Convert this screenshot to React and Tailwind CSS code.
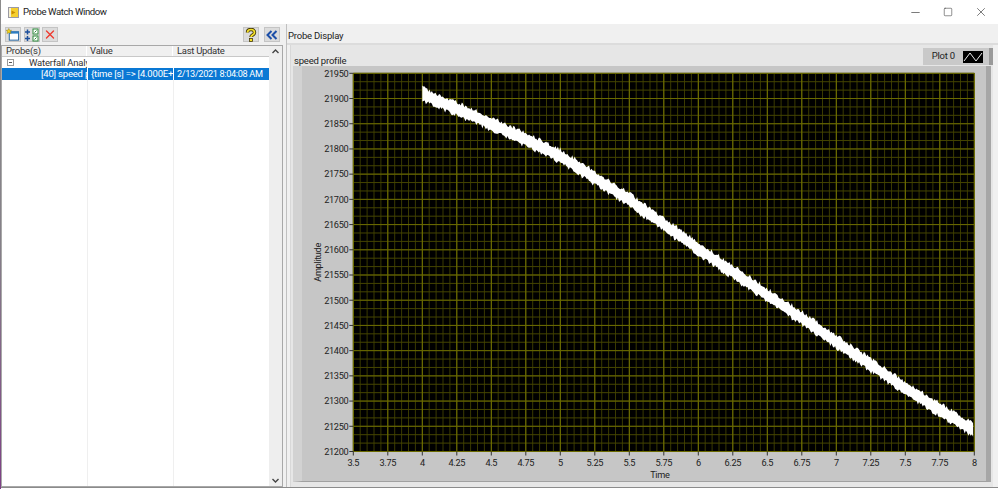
import React from 'react';
import { Minus, Square, X } from 'lucide-react';

const UI = 'font-["Roboto","Liberation_Sans",sans-serif]';

// plot box inside the graph svg, which starts at page (293,67)
const LEFT = 60.3;
const TOP = 7.3;
const RIGHT = 681.3;
const BOTTOM = 385.5;
const px = (t) => LEFT + ((t - 3.5) / 4.5) * (RIGHT - LEFT);
const py = (v) => TOP + ((21950 - v) / 750) * (BOTTOM - TOP);

const yTicks = Array.from({ length: 16 }, (_, i) => 21950 - i * 50);
const xTicks = Array.from({ length: 19 }, (_, i) => 3.5 + i * 0.25);

function rand(seed) {
  const s = Math.sin(seed * 127.1) * 43758.5453;
  return s - Math.floor(s);
}

// reading of the trace: time, centre value
const trace = [
  [4, 21909], [4.5, 21850], [5, 21786], [5.5, 21699], [6, 21602], [6.5, 21510], [7, 21418], [7.5, 21325], [8, 21241],
];

function centre(t) {
  for (let i = 0; i < trace.length - 1; i++) {
    const [a, va] = trace[i];
    const [b, vb] = trace[i + 1];
    if (t <= b) return va + ((t - a) / (b - a)) * (vb - va);
  }
  return 21241;
}

function tracePoints() {
  const upper = [];
  const lower = [];
  for (let x = px(4); x <= RIGHT; x += 1.2) {
    const t = 3.5 + ((x - LEFT) / (RIGHT - LEFT)) * 4.5;
    const y = py(centre(t));
    upper.push(`${x.toFixed(1)},${(y - 4.8 - rand(x) ** 1.5 * 4).toFixed(1)}`);
    lower.push(`${x.toFixed(1)},${(y + 4.8 + rand(x + 9) ** 1.5 * 4).toFixed(1)}`);
  }
  return [...upper, ...lower.reverse()].join(' ');
}

function Graph() {
  const minorX = [];
  for (let i = 0; i <= 90; i++) minorX.push(LEFT + (i * (RIGHT - LEFT)) / 90);
  const minorY = [];
  for (let i = 0; i <= 45; i++) minorY.push(TOP + (i * (BOTTOM - TOP)) / 45);
  const label = { fontSize: 9.2, letterSpacing: -0.35, fill: '#222' };

  return (
    <svg width="698" height="415" viewBox="0 0 698 415" className="block">
      <rect x={LEFT} y={TOP} width={RIGHT - LEFT} height={BOTTOM - TOP} fill="#000" />
      {minorX.map((x, i) => (
        <line key={i} x1={x} x2={x} y1={TOP} y2={BOTTOM} stroke="#3a3a00" strokeWidth="1" />
      ))}
      {minorY.map((y, i) => (
        <line key={i} x1={LEFT} x2={RIGHT} y1={y} y2={y} stroke="#454500" strokeWidth="1" />
      ))}
      {xTicks.map((t) => (
        <line key={t} x1={px(t)} x2={px(t)} y1={TOP} y2={BOTTOM} stroke="#767600" strokeWidth="1" />
      ))}
      {yTicks.map((v) => (
        <line key={v} x1={LEFT} x2={RIGHT} y1={py(v)} y2={py(v)} stroke="#6a6a00" strokeWidth="1" />
      ))}
      <polygon points={tracePoints()} fill="#fff" />
      {yTicks.map((v) => (
        <g key={v}>
          <line x1={LEFT - 4} x2={LEFT} y1={py(v)} y2={py(v)} stroke="#333" />
          <text x={LEFT - 5} y={py(v) + 3.3} textAnchor="end" {...label}>{v}</text>
        </g>
      ))}
      {xTicks.map((t) => (
        <g key={t}>
          <line x1={px(t)} x2={px(t)} y1={BOTTOM} y2={BOTTOM + 4} stroke="#333" />
          <text x={px(t)} y={BOTTOM + 14} textAnchor="middle" {...label}>{t}</text>
        </g>
      ))}
      <text x={(LEFT + RIGHT) / 2 - 4} y={BOTTOM + 26} textAnchor="middle" {...label}>Time</text>
      <text transform={`translate(28 ${py(21575)}) rotate(-90)`} textAnchor="middle" {...label}>Amplitude</text>
    </svg>
  );
}

function ToolButton({ children, className = '' }) {
  return (
    <div className={`w-4 h-[15px] flex items-center justify-center bg-[#dcdcdc] border border-[#c4c4c4] ${className}`}>
      {children}
    </div>
  );
}

function TitleIcon() {
  return (
    <svg width="11" height="11" viewBox="0 0 11 11">
      <rect x="0.5" y="0.5" width="10" height="10" fill="#f6cf2e" stroke="#9a9aa4" />
      <path d="M1 1h2v9H1z" fill="#f5efd0" />
      <path d="M3.500 3.500L7.500 5.500 3.500 7.500z" fill="#c98a00" />
    </svg>
  );
}

function NewProbeIcon() {
  return (
    <svg width="15" height="14" viewBox="0 0 15 14">
      <rect x="3.5" y="3.5" width="10" height="9" fill="#fff" stroke="#1b5f9e" />
      <rect x="3.5" y="3.5" width="10" height="2" fill="#2d7fc4" />
      <path d="M3 0l1 2 2 0-1.500 1.500 1 2-2.500-1-2 1 .5-2L0 2l2 0z" fill="#f2d21e" stroke="#7a6a00" strokeWidth="0.4" />
    </svg>
  );
}

function ArrangeIcon() {
  return (
    <svg width="14" height="14" viewBox="0 0 14 14">
      <path d="M0 4h5M2.500 1.500v5M0 10.500h5M2.500 8v5" stroke="#1d4f9c" strokeWidth="1.500" />
      <rect x="8" y="1" width="5" height="5" fill="#fff" stroke="#2d8a3a" />
      <rect x="8" y="8" width="5" height="5" fill="#fff" stroke="#2d8a3a" />
      <path d="M9.500 4.500l2-2M9.500 11.500l2-2" stroke="#2d8a3a" />
    </svg>
  );
}

function HelpIcon() {
  return (
    <svg width="12" height="14" viewBox="0 0 12 14">
      <path d="M2.500 4.500C2.500 2.500 4 1.500 6 1.500s3.500 1 3.500 3c0 2.500-3.500 2.500-3.500 4.500" fill="none" stroke="#44380a" strokeWidth="3.400" />
      <path d="M2.500 4.500C2.500 2.500 4 1.500 6 1.500s3.500 1 3.500 3c0 2.500-3.500 2.500-3.500 4.500" fill="none" stroke="#f5e22a" strokeWidth="1.700" />
      <rect x="4.500" y="10.500" width="3" height="3" fill="#f5e22a" stroke="#44380a" strokeWidth="0.800" />
    </svg>
  );
}

function ChevronsIcon() {
  return (
    <svg width="12" height="10" viewBox="0 0 12 10">
      <path d="M5.500 1L1.500 5l4 4M10.500 1l-4 4 4 4" fill="none" stroke="#1c4fa8" strokeWidth="2" />
    </svg>
  );
}

function Cell({ children, className = '' }) {
  return <div className={`overflow-hidden whitespace-nowrap ${className}`}>{children}</div>;
}

function ProbeTable() {
  return (
    <div className="flex-1 min-h-0 flex border border-[#a8a8a8] bg-white relative">
      <div className="flex-1 min-w-0 relative text-[9.5px] tracking-[-0.2px]">
        <div className="flex h-[11px] leading-[10px] text-[#333] bg-[#f0f0f0] border-b border-[#c8c8c8]">
          <Cell className="w-[85px] pl-1 border-r border-white">Probe(s)</Cell>
          <Cell className="w-[86px] pl-[3px] border-r border-white">Value</Cell>
          <Cell className="flex-1 pl-[4px] tracking-[-0.3px]">Last Update</Cell>
        </div>
        <div className="flex h-[11px] leading-[11px] text-[#333]">
          <div className="w-[85px] flex items-center overflow-hidden">
            <div className="ml-[5px] w-[7px] h-[7px] border border-[#9a9a9a] flex items-center justify-center shrink-0">
              <div className="w-[3px] h-px bg-[#555]" />
            </div>
            <span className="ml-[15px] whitespace-nowrap">Waterfall Analysis</span>
          </div>
        </div>
        <div className="flex h-[12px] leading-[12px] text-white bg-[#0a78d4]">
          <Cell className="w-[85px] pl-[39px]">[40] speed profile</Cell>
          <Cell className="w-[86px] pl-[3px] border-l border-white">{'{time [s] => [4.000E+0, 4.001E+0]}'}</Cell>
          <Cell className="flex-1 pl-[3px] border-l border-white text-[9.2px] tracking-[-0.35px]">2/13/2021 8:04:08 AM</Cell>
        </div>
        <div className="absolute top-[34px] bottom-0 left-[85px] w-px bg-[#efefef]" />
        <div className="absolute top-[34px] bottom-0 left-[171px] w-px bg-[#efefef]" />
      </div>
      <div className="w-[13px] bg-[#eeeeee] flex flex-col justify-between items-center py-[3px]">
        <svg width="7" height="5" viewBox="0 0 7 5"><path d="M.5 4l3-3 3 3" fill="none" stroke="#444" strokeWidth="1.400" /></svg>
        <svg width="7" height="5" viewBox="0 0 7 5"><path d="M.5 1l3 3 3-3" fill="none" stroke="#444" strokeWidth="1.400" /></svg>
      </div>
    </div>
  );
}

export default function App() {
  return (
    <div className={`w-[998px] h-[489px] overflow-hidden flex bg-white ${UI}`}>
      <div className="w-px shrink-0 bg-gradient-to-b from-[#8c8c8c] via-[#858088] to-[#7d3f85]" />
      <div className="flex-1 min-w-0 flex flex-col pb-px">
        <div className="h-6 shrink-0 flex items-center bg-white">
          <div className="ml-[7px] flex"><TitleIcon /></div>
          <span className="ml-[4px] pt-px text-[9.6px] tracking-[-0.42px] text-[#222]">Probe Watch Window</span>
          <div className="ml-auto flex items-center text-[#333]">
            <Minus size={13} strokeWidth={1.2} className="mr-[21px]" />
            <Square size={10} strokeWidth={1.3} className="mr-[21px]" />
            <X size={14} strokeWidth={1.1} className="mr-[10px]" />
          </div>
        </div>

        <div className="flex-1 min-h-0 flex bg-[#f0f0f0] border-b border-[#8b8b8b]">
          <div className="w-[282px] shrink-0 flex flex-col">
            <div className="h-[21px] shrink-0 flex items-center pl-1 pr-[3px]">
              <ToolButton><NewProbeIcon /></ToolButton>
              <ToolButton className="ml-[3px]"><ArrangeIcon /></ToolButton>
              <ToolButton className="ml-[2px]"><X size={15} strokeWidth={2.4} className="text-[#ee3b30]" /></ToolButton>
              <ToolButton className="ml-auto"><HelpIcon /></ToolButton>
              <ToolButton className="ml-[5px]"><ChevronsIcon /></ToolButton>
            </div>
            <ProbeTable />
          </div>

          <div className="w-[3px] shrink-0 ml-[1px] border-r border-[#c0c0c0] bg-[#f0f0f0]" />

          <div className="flex-1 min-w-0 flex flex-col">
            <div className="h-[21px] shrink-0 border-b-2 border-[#dcdcdc] flex items-end pb-[1px] text-[9.5px] leading-[12px] tracking-[-0.2px] text-[#222] pl-[1px]">
              Probe Display
            </div>
            <div className="flex-1 min-h-0 ml-[3px] mr-[5px] pl-[2px] flex flex-col bg-[#e6e6e6] border-l border-[#d8d8d8]">
              <div className="h-[21px] shrink-0 flex items-start justify-between text-[9.5px] tracking-[-0.2px] text-[#222]">
                <span className="pt-[9px] pl-px">speed profile</span>
                <div className="w-[70px] h-[17px] mt-[3px] flex items-center justify-end bg-[#c9c9c9] border-r-4 border-[#9a9a9a] pr-[6px]">
                  <span className="mr-[8px] text-[#222]">Plot 0</span>
                  <svg width="20" height="12" viewBox="0 0 20 12" className="bg-black block">
                    <path d="M1 10L7 2l6 8 6-8" fill="none" stroke="#e8e8e8" strokeWidth="1" />
                  </svg>
                </div>
              </div>
              <div className="w-[698px] h-[416px] bg-[#c6c6c6] border-l-[9px] border-r-[5px] border-b border-l-[#d2d2d2] border-r-[#a6a6a6] border-b-[#a0a0a0] overflow-hidden">
                <div className="-ml-[9px]"><Graph /></div>
              </div>
            </div>
          </div>
        </div>
      </div>
    </div>
  );
}
